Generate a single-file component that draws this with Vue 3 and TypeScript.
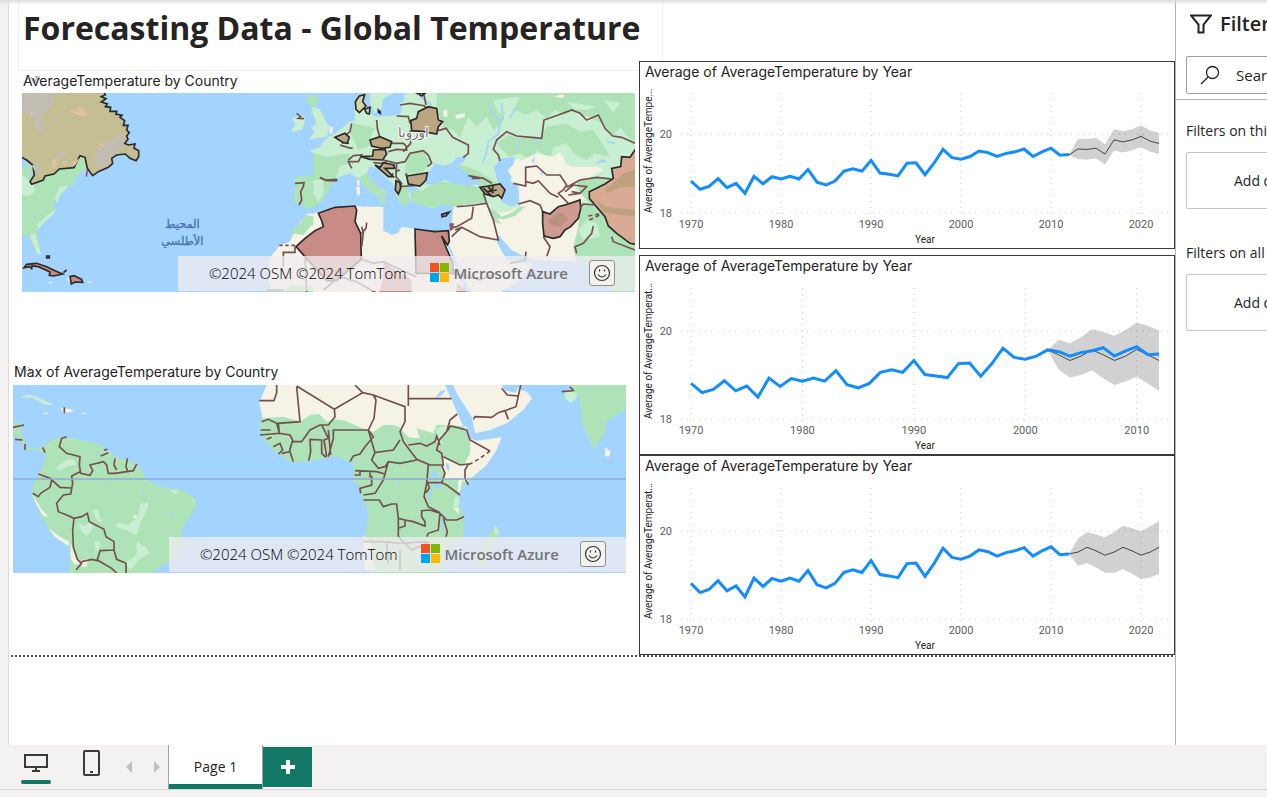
<script setup lang="ts">
interface Forecast {
  start: number
  mid: number[]
  upper: number[]
  lower: number[]
}
interface Chart {
  id: string
  label: string
  endYear: number
  top: number
  y20: number
  y18: number
  height: number
  forecast: Forecast
}

const title = 'Average of AverageTemperature by Year'

// Yearly averages, 1970 to 2012
const history: number[] = [
  18.81, 18.6, 18.67, 18.87, 18.64, 18.75, 18.5, 18.93, 18.74, 18.92, 18.86, 18.93, 18.86, 19.1, 18.78,
  18.71, 18.81, 19.06, 19.12, 19.06, 19.33, 19.01, 18.98, 18.94, 19.26, 19.27, 18.97, 19.26, 19.61, 19.4,
  19.36, 19.43, 19.57, 19.53, 19.43, 19.51, 19.55, 19.62, 19.43, 19.55, 19.64, 19.46, 19.48,
]

const charts: Chart[] = [
  {
    id: 'a', label: 'Average of AverageTempe...', endYear: 2022, top: 9, y20: 50, y18: 129, height: 164,
    forecast: {
      start: 2012,
      mid: [19.47, 19.62, 19.61, 19.64, 19.49, 19.85, 19.8, 19.85, 19.94, 19.82, 19.76],
      upper: [19.47, 19.88, 19.87, 19.9, 19.74, 20.12, 20.07, 20.12, 20.22, 20.09, 20.03],
      lower: [19.47, 19.37, 19.35, 19.38, 19.23, 19.58, 19.53, 19.58, 19.67, 19.55, 19.49],
    },
  },
  {
    id: 'b', label: 'Average of AverageTemperat...', endYear: 2012, top: 10, y20: 53, y18: 141, height: 176,
    forecast: {
      start: 2002,
      mid: [19.57, 19.46, 19.33, 19.43, 19.57, 19.46, 19.33, 19.43, 19.58, 19.46, 19.33],
      upper: [19.57, 19.8, 19.72, 19.86, 20.04, 19.98, 19.89, 20.02, 20.19, 20.12, 20.01],
      lower: [19.57, 19.12, 18.94, 19.0, 19.1, 18.92, 18.77, 18.85, 18.96, 18.8, 18.64],
    },
  },
  {
    id: 'c', label: 'Average of AverageTemperat...', endYear: 2022, top: 10, y20: 53, y18: 141, height: 176,
    forecast: {
      start: 2012,
      mid: [19.48, 19.52, 19.63, 19.55, 19.45, 19.52, 19.63, 19.55, 19.45, 19.52, 19.63],
      upper: [19.48, 19.83, 19.97, 19.92, 19.86, 19.98, 20.12, 20.07, 19.99, 20.11, 20.23],
      lower: [19.48, 19.21, 19.27, 19.17, 19.05, 19.05, 19.13, 19.03, 18.91, 18.94, 19.02],
    },
  },
]

const px = (c: Chart, year: number): number => 51 + ((year - 1970) / (c.endYear - 1970)) * 468
const py = (c: Chart, v: number): number => c.y20 + ((20 - v) / 2) * (c.y18 - c.y20)
const pts = (c: Chart, start: number, vals: number[]): string[] =>
  vals.map((v, i) => `${px(c, start + i).toFixed(1)},${py(c, v).toFixed(1)}`)
const line = (c: Chart, start: number, vals: number[]): string => pts(c, start, vals).join(' ')
const band = (c: Chart): string =>
  [...pts(c, c.forecast.start, c.forecast.upper), ...pts(c, c.forecast.start, c.forecast.lower).reverse()].join(' ')
const decades = (c: Chart): number[] => [1970, 1980, 1990, 2000, 2010, 2020].filter((y) => y <= c.endYear)
</script>

<template>
  <div class="app">
    <div class="workspace">
      <div class="rail"></div>
      <main class="canvas">
        <div class="report">
          <section class="left">
            <header class="heading"><h1>Forecasting Data - Global Temperature</h1></header>

            <article class="map-card first">
              <h2>AverageTemperature by Country</h2>
              <svg class="hint" viewBox="0 0 20 10"><path d="M1 8L4 3M7 2L10 8L13 2M11 1L16 4M15 1V5" /></svg>
              <div class="map">
                <svg viewBox="66 279 1839 597" role="img" aria-label="Average temperature map">
                  <defs>
                    <filter id="coast" x="-5%" y="-5%" width="110%" height="110%">
                      <feTurbulence type="fractalNoise" baseFrequency="0.08" numOctaves="2" seed="4" />
                      <feDisplacementMap in="SourceGraphic" scale="4" xChannelSelector="R" yChannelSelector="G" />
                    </filter>
                  </defs>
                  <rect x="66" y="279" width="1839" height="597" fill="#a3d3ff" />
                  <g filter="url(#coast)">
                    <!-- North America -->
                    <path class="green" d="M60 480L98 495L103 525L90 545L95 553L135 528L162 522L178 507L222 503L240 467L255 472L260 505L240 518L222 540L230 552L205 560L180 585L175 608L165 598L160 620L170 630L160 642L130 665L110 690L118 735L122 765L112 762L95 730L90 708L60 705Z" />
                    <path class="pale" d="M60 520L100 550L105 575L85 588L60 582ZM150 640L168 628L160 642L135 665L110 690L112 672ZM90 705L104 700L116 735L122 765L112 762L98 728ZM178 562L206 556L180 584L172 608L164 595Z" />
                    <path class="water" d="M66 482L82 492L88 505L78 500L66 502ZM88 520L95 515L98 524L88 530Z" />
                    <path class="olive dark" d="M60 272H310L316 284L304 290L318 296L304 306L322 312L316 320L332 322L330 334L350 334L348 342L366 346L360 352L374 362L370 376L384 376L380 390L388 398L380 408L384 418L374 430L385 435L405 432L402 444L416 452L416 470L408 482L390 475L376 462L350 465L335 475L338 490L325 502L295 515L278 527L262 505L255 472L240 467L228 490L222 503L178 507L162 522L135 528L130 540L95 553L90 545L103 525L98 495L80 480L60 470Z" />
                    <path fill="#c2bdb2" d="M62 279H158L162 305L145 330L122 345L135 380L130 403L112 390L100 350L62 330ZM285 490L284 450L310 432L330 425L350 408L376 402L372 430L345 462L325 480L315 502L290 505ZM185 410L198 395L194 422ZM155 362L180 345L172 368ZM95 498L112 485L126 505L112 525ZM165 465L200 452L205 462L180 475Z" />
                    <path fill="#e3c09f" d="M205 330L235 335L230 320L248 325L264 346L236 347ZM290 428L316 436L308 442ZM155 480L170 476L170 500L158 505ZM188 488L198 482L194 500ZM92 335L100 342L94 348ZM215 488L240 475L224 498ZM108 372L114 370L112 380Z" />
                    <path d="M262 510L259 530" stroke="#a03838" stroke-width="4" fill="none" />
                    <path class="red dark" d="M72 803L80 793L110 790L140 800L165 812L188 822L160 828L148 826L150 816L115 800L96 798L95 806L88 800ZM210 830L222 827L245 838L248 847L225 846L214 852ZM190 818L200 810M140 768h8v6h-8z" />
                    <path fill="#d7e6dd" d="M145 845h14v5h-14zM198 838l8-10l4 18zM262 844h14v5h-14z" />

                    <!-- Atlantic Europe and Morocco -->
                    <path class="green" d="M925 285L955 290L950 315L930 318L920 302ZM930 322L950 320L955 338L935 340Z" />
                    <path class="pale" d="M898 345L912 350L914 360L908 387L880 396L874 388L888 376L876 354L892 350ZM935 320L955 325L970 345L978 370L990 378L980 410L950 414L924 420L945 395L934 384L950 372L940 345Z" />
                    <path class="green" d="M885 530L925 528L960 533L1000 545L985 570L970 600L945 620L920 627L905 612L882 606L885 570Z" />
                    <path class="sand" d="M1000 620L960 645L925 640L910 655L885 690L870 725L840 735L812 770L805 830L815 890H1150V620Z" />
                    <path class="green" d="M915 645L955 650L960 660L930 680L910 705L875 700L880 685L900 672ZM805 866L860 868L875 855L985 866V880H820Z" />

                    <g transform="translate(960 180)">
                      <!-- Eurasia -->
                      <path class="pale" d="M10 245L25 230L50 218L70 200L90 185L105 180L103 150L108 125L128 105L132 130L148 155L165 170L200 168L240 165L245 145L240 130L255 118L250 110L265 90H960V710H880L840 625L770 605L745 590L690 590L640 588L610 590L575 570L555 540L535 525L530 545L560 600L590 610L625 608L640 615L600 660L520 710H460L420 630L385 550L395 500L400 440L370 432L340 445L310 438L275 425L262 400L300 388L270 375L242 385L262 400L268 425L250 440L232 415L218 370L190 345L170 325L150 318L140 340L165 375L205 400L190 405L200 425L188 434L178 412L150 395L115 355L90 340L60 350L45 362L8 360L12 395L-5 430L-20 400L-20 350L10 330L6 300L-30 272L0 262Z" />
                      <path class="pale" d="M150 99H225L190 115L185 145L165 160L150 130Z" />
                      <path class="green" d="M350 85H960V250L930 238L900 200L880 230L850 190L800 170L760 150L735 165L705 150L680 175L650 150L620 165L560 140L545 190L520 210L500 170L470 200L445 170L420 235L400 210L372 205L350 150ZM545 270L530 250L565 225L600 235L660 230L680 200L740 190L780 215L820 210L850 255L870 290L825 280L800 300L760 280L740 250L700 262L690 300L650 270L640 305L600 280L570 290ZM-20 280L20 290L90 280L85 310L60 320L45 360L-20 360ZM100 190L165 205L150 235L165 250L115 270L90 215ZM262 290L310 270L330 310L300 345L255 335ZM410 310L470 330L550 380L540 392L480 378L430 345Z" />
                      <path class="green" d="M270 395L310 390L350 362L400 370L445 375L490 385L500 430L470 430L400 440L370 432L340 445L310 438L275 425ZM140 340L165 375L205 400L190 405L200 425L188 434L178 412L150 395L115 355ZM225 375L262 380L268 425L250 440L232 415Z" />
                      <path class="sand" d="M400 440L500 430L520 450L545 460L600 440L595 400L575 360L560 335L590 295L640 318L665 285L700 300L760 320L830 320L850 330L780 370L765 390L810 410L780 430L800 480L760 560L770 605L640 600L575 570L535 525L530 545L560 600L590 610L640 615L600 660L520 710H460L385 550L395 500ZM585 310L650 280L700 290L720 275L745 320L700 330L650 320ZM370 150h12v20h-12zM405 165l30-5v10l-25 8zM700 110l30-8v12zM775 165l40 8l-10 12z" />
                      <path class="green" d="M505 440L530 455L545 470L575 458L600 440L615 440L585 468L550 478L530 475L545 492L520 485L510 460ZM780 430L960 430V710H880L840 625L770 605L760 560L775 500ZM770 360L870 350V400L820 440L780 400Z" />
                      <path class="pale" d="M775 510L800 480L830 490L840 530L790 540ZM610 170L660 160L650 200ZM520 120L600 110L580 150L535 160ZM740 125L830 140L800 150L765 148ZM850 120L900 130L880 160Z" />
                      <path class="water" d="M300 375L318 368L325 340L345 310L370 318L395 310L410 292L440 290L430 305L410 318L440 340L470 355L480 372L440 378L400 372L375 360L340 372ZM522 320L545 295L585 292L580 315L562 330L575 350L570 365L595 378L598 430L575 440L545 425L550 390L530 358ZM804 320L850 298L862 305L820 312ZM635 302L645 290L642 310ZM662 335l8 2l-5 12z" />
                      <path d="M488 310L500 275L505 245L535 222L540 190L512 150L508 135M545 130L550 180M585 145L570 175M600 240L590 270M640 240L655 250M300 110L335 135M860 245L885 250" fill="none" stroke="#a3d3ff" stroke-width="5" />
                      <path class="sand" d="M110 360h8l2 16h-8zM108 380h12v26h-8zM30 202l8-2v18l-10 5z" />

                      <!-- North Africa -->
                      <path class="sand" d="M-20 460L60 438L105 437L125 440L112 455L130 490L165 500L215 524L235 518L245 500L285 507L345 515L385 512L388 545L372 530L400 600L440 710H-20Z" />
                      <path class="red dark" d="M-72 560L-45 535L-15 512L10 500L5 482L-5 460L45 442L105 438L110 450L105 485L122 520L124 598L100 618L50 662L20 662ZM285 507L345 515L385 512L388 545L382 555L365 528L375 555L398 608L400 640H288Z" />
                      <path class="red" d="M190 605L275 660V705H175L190 650ZM412 670L438 690L440 705H408Z" />
                      <path class="border" d="M125 500L130 520L125 560M125 598L160 610L190 605L288 650M140 488L138 505L125 520M10 690L60 650L110 665L170 700M400 640L480 660L530 640" />

                      <!-- Country borders -->
                      <path class="border" d="M95 190L90 215L78 225M170 180L172 205L180 235M240 135L270 130L312 137L320 145M230 168L265 170L270 190M312 105L318 135M270 212L272 250L258 265L250 275M355 212L378 205L398 232L445 255L445 280L430 292M205 275L230 268L260 270L258 258L250 250L215 250M190 300L230 310L255 305L270 280L310 272L325 285L335 310L322 320M85 300L100 287L125 285L115 305L85 305L95 325M60 255L82 262L98 265M0 352L20 362L52 362M200 305L185 310L160 308M230 310L228 350L245 370L240 380L305 375M225 335L240 330M210 350L220 340M255 345L262 340" />
                      <path class="border" d="M540 303L535 285L520 268L530 240L560 215L590 228L635 232L665 235L672 180L715 165L755 150L780 160L800 180L835 165L855 205L878 228L905 232L945 250M580 370L617 378L617 322L650 318L680 345L720 345L740 375L730 390L715 400L745 430M617 365L640 370L655 362L690 400L715 412M595 432L630 422L660 435L670 460M740 382L780 360L830 352L875 357M735 395L760 375L800 380L780 400L755 395M745 405L780 400M445 347L490 355L515 370M490 400L500 430L465 435L440 438L410 440M500 430L520 480L535 540L480 530L425 502L395 530M460 440L455 475L410 500L390 505M425 502L405 510M670 530L690 560L680 590M820 498L815 520L790 550L765 560L770 580M875 530L880 545L945 570M618 575L615 600L570 610M455 355L480 355" />
                      <path class="border" stroke-dasharray="12 9" d="M805 468L850 460L880 450M808 480L840 465" />

                      <!-- Shaded countries -->
                      <path class="brown dark" d="M325 140L350 145L355 180L368 185L355 200L350 222L310 215L275 212L272 182L290 175L295 155ZM150 240L180 230L215 245L210 262L185 265L155 258ZM122 290L158 288L160 270L195 268L200 282L188 300L150 298ZM45 232L75 220L88 232L82 250L70 248ZM260 348L300 342L322 338L318 360L300 378L265 372ZM165 315L180 322L190 308L222 315L224 325L195 325L220 350L205 350L180 328ZM228 362L240 368L242 385L235 402L226 390ZM480 382L505 378L540 372L555 390L545 415L535 405L520 410L495 402ZM290 99L316 99L305 108Z" />
                      <path d="M490 385L515 408M505 380L520 400M520 375L515 395M500 395L530 390" class="dark" fill="none" />
                      <path fill="#d6d6a0" class="dark" d="M106 125L118 108L134 104L128 125L138 138L118 158L108 148ZM134 148L150 142L148 162L140 160ZM175 150l6 6v4l-6-4z" />
                      <path class="red dark" d="M365 463L388 456L378 468L366 470Z" />
                      <path fill="#cf9b90" class="dark" d="M668 455L690 462L715 440L745 432L780 420L782 445L775 475L752 500L735 510L720 530L700 535L672 528L668 490Z" />
                      <path fill="#bb9183" d="M685 480L720 455L745 475L720 500L690 495Z" />
                      <path fill="#d9ab94" class="dark" d="M955 255L930 292L905 290L902 320L875 325L880 355L855 372L808 395L808 415L825 435L855 470L865 498L890 520L930 550L960 555V250Z" />
                      <path fill="#bfa07f" d="M855 385L870 378L910 340L945 330V380L900 382L860 400ZM825 420L860 440L945 450V470L880 462L850 455Z" />
                      <path class="border" d="M780 445L790 432L825 435" stroke="#2c2a2a" />
                      <path d="M388 490l14 0l-4 20l-8 2z" fill="#8e5a58" />
                    </g>
                    <path class="border" d="M885 550L912 548L910 560L902 575L905 600L897 615M890 340L902 350L895 355L912 356M960 533L975 540L1012 538M885 737V757H850V800M915 765L920 876M800 870H850" />
                    <path class="border" stroke-dasharray="10 8" d="M838 736H886" />
                  </g>
                  <g class="arabic">
                    <text x="547" y="685" fill="#4b75ab" direction="rtl">المحيط</text>
                    <text x="547" y="736" fill="#4b75ab" direction="rtl">الأطلسي</text>
                    <text x="1240" y="412" class="continent" direction="rtl">اوروبا</text>
                  </g>
                </svg>
                <div class="credits">
                  <span>©2024 OSM ©2024 TomTom</span>
                  <span class="brand">
                    <svg viewBox="0 0 19 19"><path fill="#f25022" d="M0 0h9v9H0z" /><path fill="#7fba00" d="M10 0h9v9h-9z" /><path fill="#00a4ef" d="M0 10h9v9H0z" /><path fill="#ffb900" d="M10 10h9v9h-9z" /></svg>
                    <b>Microsoft Azure</b>
                  </span>
                  <button type="button" aria-label="Feedback">
                    <svg viewBox="0 0 18 18"><circle cx="9" cy="9" r="7.5" /><path d="M5 10.5Q9 15.500 13 10.500M6.500 5.500v2M11.500 5.500v2" /></svg>
                  </button>
                </div>
              </div>
            </article>

            <article class="map-card second">
              <h2>Max of AverageTemperature by Country</h2>
              <svg class="hint" viewBox="0 0 20 10"><path d="M1 2V9M4 1L8 6M9 2L12 5M13 1L16 5M15 3V7" /></svg>
              <div class="map">
                <svg viewBox="39 105 1839 564" role="img" aria-label="Maximum temperature map">
                  <rect x="39" y="105" width="1839" height="564" fill="#a3d3ff" />
                  <g filter="url(#coast)">
                    <!-- Caribbean and South America -->
                    <path class="pale" d="M58 143L85 133L110 140L135 152L164 166L135 164L110 150L90 142ZM90 105l14 6l-8-1z" />
                    <path class="sand" d="M182 175L210 176L222 184L190 190ZM130 188h14v4h-14zM245 188h14v4h-14z" />
                    <path class="green" d="M30 220L68 218L62 245L72 270L75 292L110 296L130 290L145 275L170 265L195 260L240 270L290 278L320 300L345 320L400 335L425 360L435 385L480 410L545 420L585 445L588 470L570 500L548 530L542 580L535 620L480 650L440 680H210L208 590L150 545L120 490L95 435L100 400L125 355L140 315L110 300L80 300L55 268L30 245Z" />
                    <path class="pale" d="M168 352L200 330L222 328L228 345L200 350L180 362ZM278 480L295 478L298 500L308 518L292 512ZM420 462L445 458L440 485L420 520L410 555L388 545L350 530L348 518L385 525L415 500ZM235 520L255 528L270 515L280 535L262 558L245 545ZM410 575L435 590L450 610L420 625L392 660L375 640L410 615ZM285 572L302 575L295 605L285 600ZM508 420l30 2l-12 12z" />
                    <path class="sand" d="M95 430L125 478L145 500L130 498L110 465ZM146 535L180 560L208 575L205 588L165 562ZM212 580L222 610L238 640L225 645L212 625ZM242 632L265 625L260 650L245 650ZM400 495l14 2l-10 10zM578 445l6 12l-6-4z" />
                    <path class="water" d="M505 492l20-8l-12 12zM425 425l8 0v14zM315 400l12 2l-6 5zM284 308l8-2v14z" />
                    <path class="border" d="M200 260L185 265L178 290L200 310L240 320L238 345L242 370L270 376L278 362L270 345L310 335L320 345L325 370L345 370L400 362L410 342M345 325L342 345L350 360M382 325L378 350L382 362M240 365L215 378L218 400L212 432L190 435L170 460L175 485L200 495L222 505L245 500L262 490L268 515L312 538L318 560L342 575L342 600L300 602L292 630L335 655L350 669M115 372L150 385L180 412L215 414M155 390L150 412L122 430L115 440L98 430M222 505L218 540L220 590L232 628L245 640L228 660M245 635L275 628L292 632M342 600L350 628L378 640V669M39 232L72 225M45 268L68 270M75 282V300M128 292L135 308M193 172V190M302 318L325 308M312 300L322 298" />

                    <!-- Africa, Arabia and India -->
                    <path class="green" d="M805 95L778 155L788 200L778 230L790 265L825 305L880 338L940 332L985 322L1020 320L1050 338L1058 332L1062 355L1058 385L1075 410L1090 450L1100 470L1105 510L1095 550L1090 575L1120 680H1320L1345 600L1390 565L1392 500L1380 470L1375 430L1400 400L1460 345L1490 300L1505 262L1430 272L1410 265L1390 230L1360 160L1330 95Z" />
                    <path class="sand" d="M805 95L778 155L788 205L850 200L900 215L930 195L958 192L980 215L1000 208L1035 212L1080 232L1100 240L1120 245L1150 225L1180 225L1200 232L1225 262L1260 265L1250 235L1300 250L1310 225L1355 225L1400 230L1410 262L1390 230L1360 160L1330 95ZM1410 265L1430 272L1505 262L1490 300L1460 345L1400 395L1375 388L1335 385L1325 320L1390 348L1410 310ZM1375 390h12l-6 30l-8 10zM1360 475l18-2l-4 18zM1090 555L1110 575L1125 660H1095Z" />
                    <path class="pale" d="M1310 235L1340 225L1345 250L1320 265L1330 285L1310 280ZM1365 440l14 0l-4 30l-16 5z" />
                    <path class="sand" d="M1355 95L1370 130L1415 200L1425 250L1470 240L1520 220L1570 180L1596 145L1580 125L1562 120L1558 105L1548 128L1515 122L1500 95Z" />
                    <path class="green" d="M1715 95L1725 150L1738 130L1745 220L1780 298L1815 250L1818 215L1890 170V95ZM1490 525L1498 550L1460 640L1438 665L1430 610L1455 570Z" />
                    <path class="pale" d="M1695 120l25-4l12 25l-18 18l-20-15zM1485 522l13 30l-14 0z" />
                    <path class="sand" d="M1815 290L1832 305L1828 320L1815 318Z" />
                    <path class="water" d="M1338 120l-12 14l-20 12l14-22zM1292 365h20v18h-20zM1300 400h24v14h-22zM1290 415l8 10l-8 30l-4-20zM1328 485l6 20l-4 40l-6-20zM1340 335l8 14l-2 16l-8-14zM1195 400h6v16l-4-8z" />
                    <path class="border" d="M830 105V128L822 152H778M890 110L900 215L835 220L838 250L870 255L880 275L905 275L930 240L960 225L985 225L1005 200L1003 178L890 108M1003 178L1088 128L1065 105M1088 128L1120 135L1215 170V215L1200 245L1210 275L1250 328L1290 345M1225 105V168M1225 146H1355M1120 135L1128 150L1122 205L1105 240L1060 240L1000 240L1000 265L985 320M1105 240L1120 260L1095 290L1080 312L1060 318L1050 335M785 215L805 208L830 220L838 250L780 255M782 240L812 240M800 268L815 262M820 290L840 280L848 300L835 312M845 310L870 305L880 335M870 255L878 270L868 305M930 270L932 305L926 332M928 268L965 270V310L978 322M965 225L985 265L972 270L980 320M985 240L992 315M1105 240L1118 285L1125 308L1180 300L1200 270M1125 308L1115 330L1135 355L1155 350L1165 335L1200 340L1250 330M1165 335L1150 390L1125 430L1090 435M1065 362L1130 365L1155 372M1063 375H1080L1080 362M1110 365V380H1115V405L1080 415L1082 430M1090 450H1138L1150 470L1175 462L1190 462L1195 505L1215 510L1240 515L1275 528V515L1265 500L1265 482L1290 480L1320 490M1195 505V560M1215 510V528L1195 535M1320 488L1285 470L1272 440L1280 400L1285 345L1330 345L1325 310L1310 300L1318 270L1340 245L1352 228L1400 240L1410 270L1470 303M1225 285L1260 280L1280 288L1305 275L1310 258L1320 285M1340 245L1350 210L1372 192M1330 320L1380 345L1405 342L1395 360V385L1405 405M1280 398H1325L1340 405L1380 435M1325 398L1335 370L1325 345M1320 490L1340 510H1370L1392 500M1320 490L1315 540L1285 550L1280 560M1330 505L1342 545L1338 560M1283 400l5 14l-10 14" />
                    <path class="border" stroke-dasharray="12 9" d="M1470 303L1440 325L1405 345" />
                    <path class="border" d="M1420 208L1425 200L1475 202L1495 188L1515 182L1548 170L1555 138L1522 135L1505 115M1515 182L1525 208M1555 138L1562 105M1685 125L1720 122L1710 110M1090 575L1150 575L1200 580L1280 575M1195 560L1235 600L1290 575M1160 580L1165 640M1200 600V660" />
                  </g>
                  <path d="M39 387H1878" stroke="#92a9dc" stroke-width="5" />
                </svg>
                <div class="credits">
                  <span>©2024 OSM ©2024 TomTom</span>
                  <span class="brand">
                    <svg viewBox="0 0 19 19"><path fill="#f25022" d="M0 0h9v9H0z" /><path fill="#7fba00" d="M10 0h9v9h-9z" /><path fill="#00a4ef" d="M0 10h9v9H0z" /><path fill="#ffb900" d="M10 10h9v9h-9z" /></svg>
                    <b>Microsoft Azure</b>
                  </span>
                  <button type="button" aria-label="Feedback">
                    <svg viewBox="0 0 18 18"><circle cx="9" cy="9" r="7.5" /><path d="M5 10.5Q9 15.500 13 10.500M6.500 5.500v2M11.500 5.500v2" /></svg>
                  </button>
                </div>
              </div>
            </article>
          </section>

          <section class="right">
            <article v-for="c in charts" :key="c.id" class="chart" :class="c.id">
              <h2>{{ title }}</h2>
              <svg :viewBox="`0 0 534 ${c.height}`" role="img" :aria-label="title">
                <g class="grid">
                  <path v-for="y in decades(c)" :key="y" :d="`M${px(c, y)} ${c.top}V${c.y18 + 3}`" />
                  <path :d="`M41 ${c.y20}H528M41 ${c.y18}H528`" />
                </g>
                <polygon :points="band(c)" class="band" />
                <polyline :points="line(c, c.forecast.start, c.forecast.mid)" class="mid" />
                <polyline :points="line(c, 1970, history)" class="series" />
                <g class="ticks">
                  <text x="32" :y="c.y20 + 4" text-anchor="end">20</text>
                  <text x="32" :y="c.y18 + 4" text-anchor="end">18</text>
                  <text v-for="y in decades(c)" :key="y" :x="px(c, y)" :y="c.y18 + 15" text-anchor="middle">{{ y }}</text>
                </g>
                <g class="axis">
                  <text x="285" :y="c.y18 + 30" text-anchor="middle">Year</text>
                  <text :transform="`translate(12 ${c.y18}) rotate(-90)`">{{ c.label }}</text>
                </g>
              </svg>
            </article>
          </section>
        </div>
        <div class="page-edge"></div>
      </main>

      <aside class="filters">
        <div class="filters-head">
          <svg viewBox="0 0 22 20"><path d="M1 1.500H21L13.500 10.500V18.500H8.500V10.500Z" /></svg>
          <h2>Filters</h2>
        </div>
        <label class="search">
          <svg viewBox="0 0 20 20"><circle cx="12.500" cy="7.500" r="6" /><path d="M8 12L1 19" /></svg>
          <input type="text" placeholder="Search" aria-label="Search" />
        </label>
        <div class="group top">
          <h3>Filters on this page</h3>
          <div class="drop">Add data fields here</div>
        </div>
        <div class="group">
          <h3>Filters on all pages</h3>
          <div class="drop">Add data fields here</div>
        </div>
      </aside>
    </div>

    <nav class="tabs">
      <button type="button" class="view active" aria-label="Desktop layout">
        <svg viewBox="0 0 24 26"><path d="M1 5H23V17H1ZM12 17V20M8 21H16" /></svg>
      </button>
      <button type="button" class="view" aria-label="Mobile layout">
        <svg viewBox="0 0 24 26"><rect x="4" y="1" width="15" height="24" rx="1" /><path d="M10 22H13" /></svg>
      </button>
      <button type="button" class="arrow" aria-label="Previous page"><svg viewBox="0 0 6 12"><path d="M6 0V12L0 6Z" /></svg></button>
      <button type="button" class="arrow" aria-label="Next page"><svg viewBox="0 0 6 12"><path d="M0 0V12L6 6Z" /></svg></button>
      <button type="button" class="tab">Page 1</button>
      <button type="button" class="add" aria-label="New page"><svg viewBox="0 0 14 14"><path d="M7 0V14M0 7H14" /></svg></button>
    </nav>
    <footer class="status"></footer>
  </div>
</template>

<style>
html,
body {
  overflow: hidden;
  background: #fff;
}
</style>

<style scoped>
* {
  box-sizing: border-box;
}
.app {
  position: relative;
  display: flex;
  flex-direction: column;
  min-height: 100vh;
  font-family: 'Open Sans', 'Noto Sans', sans-serif;
  color: #252423;
}
.app::before {
  content: '';
  position: absolute;
  z-index: 2;
  inset: 0 0 auto;
  height: 5px;
  background: linear-gradient(#dcdcdc, rgba(255, 255, 255, 0));
}
h1, h2, h3 {
  margin: 0;
  font-weight: 400;
  white-space: nowrap;
}
button {
  padding: 0;
  border: 0;
  background: none;
  font: inherit;
  color: inherit;
}
svg {
  display: block;
}
.workspace {
  flex: 1;
  display: grid;
  grid-template-columns: 9px minmax(0, 1fr) 92px;
}
.rail {
  background: #f3f2f1;
  border-right: 1px solid #dddbd9;
}
.report {
  display: grid;
  grid-template-columns: 630fr 536fr;
}
.left {
  min-width: 0;
}
.heading {
  height: 71px;
  margin: 0 -24px 0 9px;
  padding: 4px 0 0 4px;
  border: 1px solid #efefef;
  border-top: 0;
}
h1 {
  font-size: 32px;
  line-height: 48px;
  font-weight: 700;
}
.map-card {
  position: relative;
}
.map-card h2,
.chart h2 {
  font-family: Inter, 'Open Sans', sans-serif;
  font-size: 14px;
  line-height: 20px;
}
.hint {
  position: absolute;
  top: 4px;
  left: 2px;
  width: 20px;
  fill: none;
  stroke: rgba(60, 60, 60, 0.5);
}
.first {
  margin: 0 4px 0 13px;
}
.second {
  margin: 70px 13px 0 4px;
}
.first h2,
.second h2 {
  height: 22px;
  padding-left: 1px;
}
.second h2 {
  height: 23px;
}
.map {
  position: relative;
}
.map > svg {
  width: 100%;
}
.green { fill: #aee3b8; }
.pale { fill: #c8efd2; }
.sand { fill: #f5f2e6; }
.water { fill: #a3d3ff; }
.olive { fill: #c6be93; }
.red { fill: #c98b85; }
.brown { fill: #bba583; }
.dark {
  stroke: #2c2a2a;
  stroke-width: 5;
}
.border {
  fill: none;
  stroke: #75504f;
  stroke-width: 5;
}
.arabic {
  font-family: 'DejaVu Sans', sans-serif;
  font-size: 34px;
  text-anchor: middle;
}
.arabic text {
  stroke: #4b75ab;
}
.arabic .continent {
  fill: #75736f;
  font-size: 40px;
  stroke: #fff;
  stroke-width: 6;
  paint-order: stroke;
}
.credits {
  position: absolute;
  right: 0;
  bottom: 1px;
  display: flex;
  align-items: center;
  height: 35px;
  padding: 0 20px 2px 31px;
  background: rgba(239, 237, 239, 0.77);
  font-size: 15px;
  font-weight: 300;
  color: #000;
  white-space: nowrap;
}
.brand {
  display: flex;
  align-items: center;
  gap: 4px;
  margin: 0 21px 0 24px;
  color: #737373;
}
.brand b {
  font-weight: 600;
}
.brand svg {
  width: 19px;
}
.credits button {
  display: grid;
  place-items: center;
  width: 26px;
  height: 26px;
  border: 1px solid #8f8f8f;
  border-radius: 3px;
  background: #f3f2f1;
}
.credits button svg {
  width: 18px;
  fill: none;
  stroke: #333;
  stroke-width: 1.2;
}
.right {
  position: relative;
  padding-top: 61px;
}
.chart {
  border: 1px solid #3b3a39;
  background: #fff;
}
.chart.a {
  margin-bottom: 6px;
}
.chart h2 {
  height: 22px;
  padding-left: 5px;
}
.chart svg {
  width: 100%;
  font-family: Roboto, sans-serif;
}
.grid path {
  stroke: #c4c4c4;
  stroke-dasharray: 1 5;
}
.band {
  fill: rgba(0, 0, 0, 0.18);
}
.mid {
  fill: none;
  stroke: #444;
}
.series {
  fill: none;
  stroke: #118dff;
  stroke-width: 3;
}
.ticks {
  font-size: 11px;
  fill: #605e5c;
}
.axis {
  font-size: 10px;
  fill: #252423;
}
.page-edge {
  height: 2px;
  margin-left: 2px;
  background: repeating-linear-gradient(90deg, #555 0 2px, transparent 2px 4px);
}
.filters {
  overflow: hidden;
  border-left: 1px solid #b3b3b3;
  white-space: nowrap;
}
.filters-head {
  display: flex;
  align-items: center;
  gap: 8px;
  height: 56px;
  padding: 0 0 9px 14px;
}
.filters-head h2 {
  font-size: 20px;
  font-weight: 600;
}
.filters-head svg {
  flex: none;
  width: 22px;
  fill: none;
  stroke: #252423;
  stroke-width: 2;
}
.search {
  display: flex;
  align-items: center;
  gap: 16px;
  width: 240px;
  height: 38px;
  margin-left: 10px;
  padding-left: 13px;
  border: 1px solid #a19f9d;
  border-radius: 2px;
}
.search svg {
  flex: none;
  width: 20px;
  fill: none;
  stroke: #252423;
  stroke-width: 1.3;
}
.search input {
  width: 160px;
  padding: 0;
  border: 0;
  outline: 0;
  font: 15px 'Open Sans', sans-serif;
}
.search input::placeholder {
  color: #252423;
}
.group {
  height: 122px;
  padding-left: 10px;
}
.group.top {
  margin-top: 5px;
  border-top: 1px solid #b3b3b3;
  height: 143px;
  padding-top: 20px;
}
.group h3 {
  height: 32px;
  font-size: 14px;
  line-height: 22px;
}
.drop {
  width: 240px;
  height: 57px;
  padding-left: 47px;
  border: 1px solid #c8c6c4;
  border-radius: 2px;
  font-size: 14px;
  line-height: 55px;
}
.tabs {
  display: flex;
  height: 45px;
  padding-left: 8px;
  border-bottom: 1px solid #d8d6d4;
  background: #f3f2f1;
}
.view {
  width: 56px;
  display: flex;
  flex-direction: column;
  align-items: center;
  padding-top: 5px;
}
.view svg {
  width: 24px;
  fill: none;
  stroke: #3b3a39;
  stroke-width: 2;
}
.active::after {
  content: '';
  width: 30px;
  height: 4px;
  margin-top: 4px;
  border-radius: 2px;
  background: #117865;
}
.arrow {
  width: 28px;
  padding-left: 6px;
}
.arrow svg {
  width: 6px;
  fill: #c2c0be;
}
.tab {
  width: 95px;
  margin-left: -8px;
  padding-bottom: 2px;
  border: 1px solid #a3a1a0;
  border-width: 0 1px 0;
  background: linear-gradient(0deg, #117865 5px, #fff 5px);
  font-size: 14px;
}
.add {
  width: 49px;
  height: 40px;
  margin-top: 2px;
  display: grid;
  place-items: center;
  background: #117865;
}
.add svg {
  width: 14px;
  stroke: #fff;
  stroke-width: 4;
}
.status {
  height: 7px;
  background: #f3f2f1;
}
</style>
